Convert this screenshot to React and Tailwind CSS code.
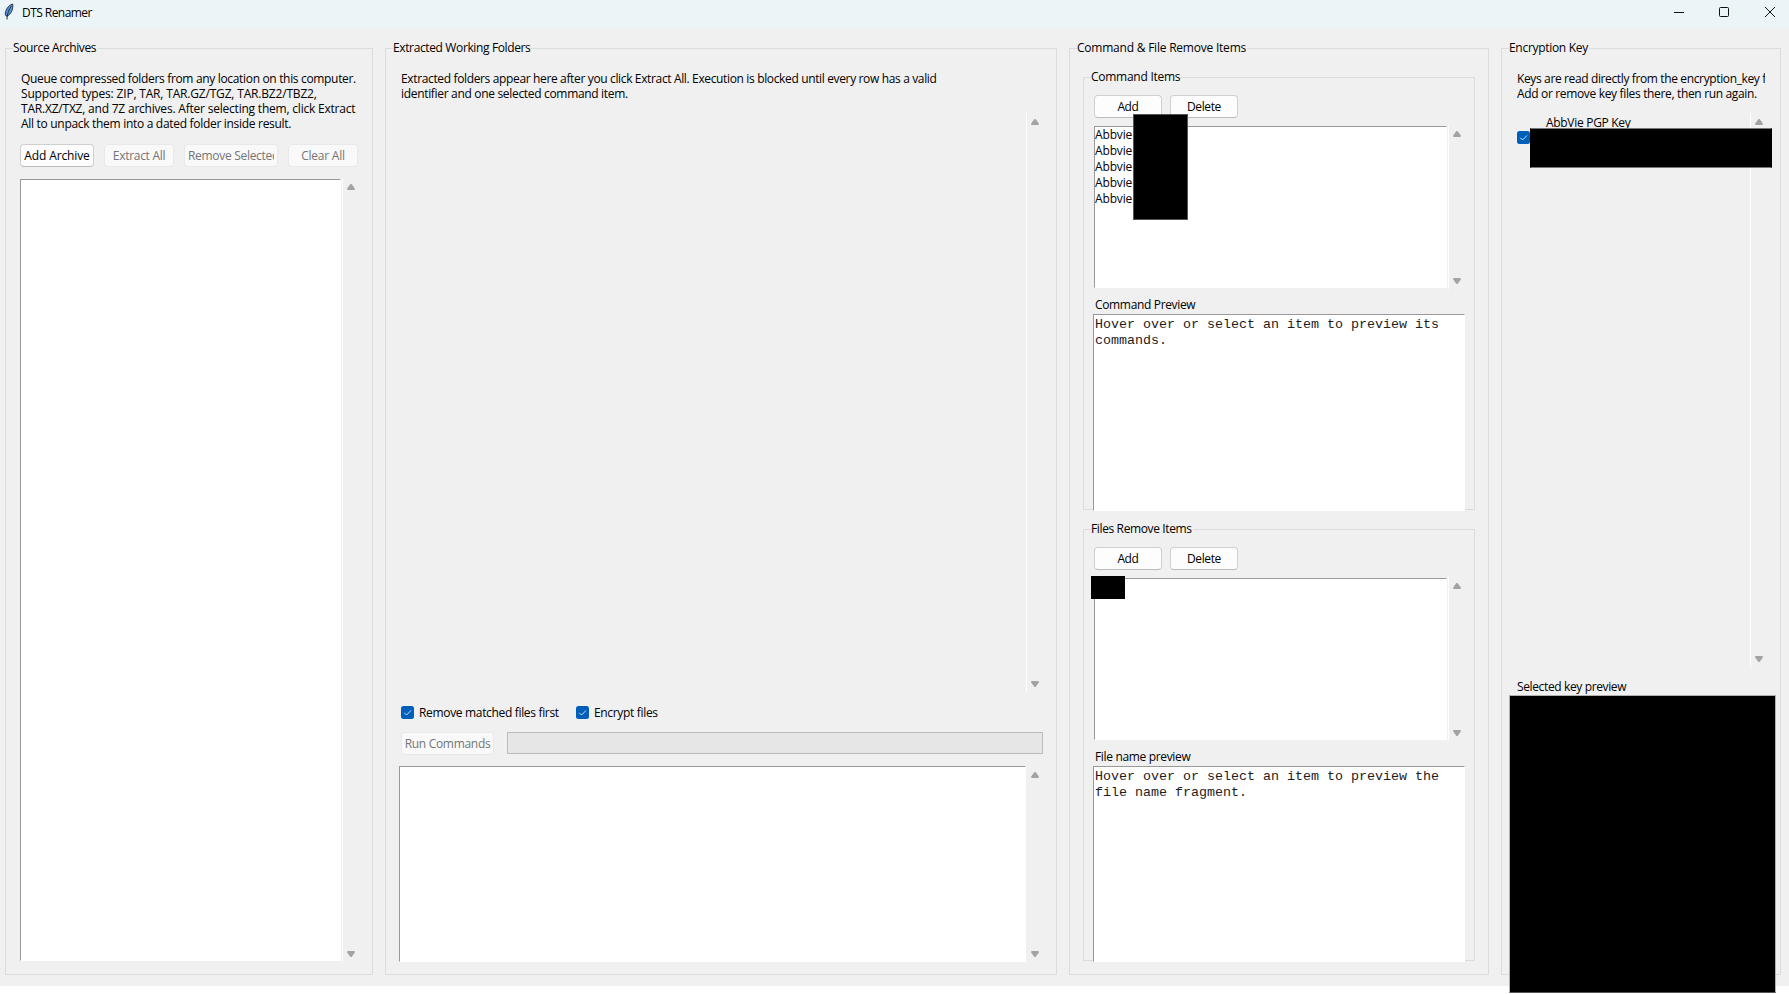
import React from "react";

function Arrow({ down }) {
  return (
    <svg width="8" height="6" viewBox="0 0 8 6" className={down ? "block rotate-180" : "block"}>
      <path d="M3.2 0.3 Q4 -0.3 4.8 0.3 L7.8 4.4 Q8.2 6 7 6 H1 Q-0.2 6 0.2 4.4 Z" fill="#a3a3a3" />
    </svg>
  );
}

function Scrollbar({ className = "" }) {
  return (
    <div className={`flex shrink-0 flex-col justify-between ${className}`}>
      <Arrow />
      <Arrow down />
    </div>
  );
}

function Group({ title, titleClass, className = "", children }) {
  return (
    <section className={`flex shrink-0 flex-col border border-[#dcdcdc] ${className}`}>
      <h2 className={`ml-[7px] -mt-[9px] h-[16px] shrink-0 bg-[#f0f0f0] leading-[16px] ${titleClass}`}>{title}</h2>
      {children}
    </section>
  );
}

function Button({ className = "", padding = "px-[3px]", disabled, children }) {
  return (
    <button
      className={`flex h-[23px] shrink-0 items-center overflow-hidden rounded-[4px] border ${padding} ${
        disabled
          ? "border-[#e9e9e9] bg-[#f9f9f9] text-[#757575]"
          : "border-[#d0d0d0] border-b-[#bcbcbc] bg-[#fdfdfd]"
      } ${className}`}
    >
      <span className="w-full overflow-hidden leading-[17px]">{children}</span>
    </button>
  );
}

function Check() {
  return (
    <svg width="13" height="13" viewBox="0 0 13 13" className="block shrink-0">
      <rect width="13" height="13" rx="2.5" fill="#005fb8" />
      <path d="M3.3 6.8 L5.5 9 L10 4.5" fill="none" stroke="#cfe4f7" strokeWidth="1" />
    </svg>
  );
}

function ItemsGroup({ title, titleClass, height, previewHeight, label, preview, items, cover }) {
  return (
    <Group title={title} titleClass={titleClass} className={`ml-[13px] w-[392px] ${height}`}>
      <div className="ml-[10px] mt-[10px] flex gap-[8px]">
        <Button className="w-[68px] text-center">Add</Button>
        <Button className="w-[68px] text-center">Delete</Button>
      </div>
      <div className="relative ml-[10px] mt-[7px] flex h-[164px] shrink-0">
        <div className="mt-px h-[162px] w-[353px] border border-b-white border-l-[#999] border-r-white border-t-[#999] bg-white">
          {items.map((item, i) => (
            <div key={i} className="h-[16px] leading-[16px] tracking-[-0.15px]">
              {item}
            </div>
          ))}
        </div>
        <div className="ml-px h-full w-px bg-white" />
        <Scrollbar className="ml-[4px] mb-[5px] mt-[6px]" />
        <div className={`absolute bg-black ${cover}`} />
      </div>
      <div className="ml-[11px] mt-[8px] h-[16px] shrink-0 leading-[16px] tracking-[-0.34px]">{label}</div>
      <div
        className={`ml-[9px] mt-px w-[372px] shrink-0 border border-b-white border-l-[#999] border-r-white border-t-[#999] bg-white pl-px pt-[2px] font-['Liberation_Mono','Courier_New',monospace] text-[13.33px] leading-[16px] tracking-normal text-[#1c1c1c] ${previewHeight}`}
      >
        {preview.map((line) => (
          <div key={line} className="whitespace-pre">{line}</div>
        ))}
      </div>
    </Group>
  );
}

export default function App() {
  return (
    <div className="flex h-[994px] w-[1789px] flex-col overflow-hidden bg-white font-['Open_Sans','Noto_Sans',sans-serif] text-[12px] tracking-[-0.37px] whitespace-nowrap text-black">
      <header className="flex h-[28px] shrink-0 bg-[#ebf5f8]">
        <svg width="10" height="17" viewBox="0 0 10 17" className="ml-[4px] mt-[3px] shrink-0">
          <path d="M8.7 1 C5.5 1.8 2.6 5 1.6 8.5 C1 10.6 1.4 12.4 2.2 13.2 C4.6 13 7 10.4 8 7.5 C8.7 5.4 9 3 8.7 1 Z" fill="#5b97dd" stroke="#1d2633" strokeWidth="0.9" />
          <path d="M7.4 3.2 C5 6.3 3.3 10 3 16.5" fill="none" stroke="#101820" strokeWidth="0.9" />
        </svg>
        <h1 className="ml-[8px] mt-[5px] h-[16px] leading-[16px] tracking-[-0.55px]">DTS Renamer</h1>
        <svg width="102" height="12" viewBox="0 0 102 12" className="ml-auto mr-[13px] mt-[6px] shrink-0" fill="none" stroke="#111" strokeWidth="1">
          <path d="M0 6.5 H10" />
          <rect x="45.5" y="1.5" width="9" height="9" rx="1" />
          <path d="M91 1 L101 11 M101 1 L91 11" />
        </svg>
      </header>

      <main className="flex h-[958px] shrink-0 gap-[12px] bg-[#f0f0f0] pl-[5px] pt-[20px]">
        <Group title="Source Archives" titleClass="w-[85px]" className="h-[927px] w-[368px]">
          <div className="ml-[15px] mt-[15px] h-[60px] shrink-0 leading-[15px]">
            <div className="tracking-[-0.33px]">Queue compressed folders from any location on this computer.</div>
            <div className="tracking-[-0.18px]">Supported types: ZIP, TAR, TAR.GZ/TGZ, TAR.BZ2/TBZ2,</div>
            <div className="tracking-[-0.21px]">TAR.XZ/TXZ, and 7Z archives. After selecting them, click Extract</div>
            <div className="tracking-[-0.3px]">All to unpack them into a dated folder inside result.</div>
          </div>
          <div className="ml-[14px] mt-[13px] flex gap-[10px]">
            <Button className="w-[74px] text-center tracking-[-0.12px]">Add Archive</Button>
            <Button disabled className="w-[70px] text-center tracking-[-0.3px]">Extract All</Button>
            <Button disabled className="w-[94px] tracking-[-0.3px]">Remove Selected</Button>
            <Button disabled className="w-[70px] text-center tracking-[-0.25px]">Clear All</Button>
          </div>
          <div className="ml-[14px] mt-[11px] flex h-[784px] shrink-0">
            <div className="mt-px h-[782px] w-[321px] border border-b-white border-l-[#999] border-r-white border-t-[#999] bg-white" />
            <div className="ml-px h-full w-px bg-white" />
            <Scrollbar className="ml-[4px] mb-[5px] mt-[6px]" />
          </div>
        </Group>

        <Group title="Extracted Working Folders" titleClass="w-[138px]" className="h-[927px] w-[672px]">
          <div className="ml-[15px] mt-[15px] h-[30px] shrink-0 leading-[15px]">
            <div className="tracking-[-0.355px]">Extracted folders appear here after you click Extract All. Execution is blocked until every row has a valid</div>
            <div className="tracking-[-0.32px]">identifier and one selected command item.</div>
          </div>
          <div className="ml-[640px] mt-[12px] flex h-[579px] shrink-0">
            <div className="h-full w-px bg-white" />
            <Scrollbar className="ml-[4px] mb-[5px] mt-[6px]" />
          </div>
          <div className="ml-[15px] mt-[14px] flex h-[13px] shrink-0 items-center tracking-[-0.33px]">
            <Check />
            <span className="ml-[5px] w-[157px]">Remove matched files first</span>
            <Check />
            <span className="ml-[5px]">Encrypt files</span>
          </div>
          <div className="ml-[15px] mt-[13px] flex shrink-0">
            <Button disabled padding="px-[2px]" className="w-[93px] tracking-[-0.3px]">Run Commands</Button>
            <div className="ml-[13px] h-[22px] w-[536px] border border-[#bcbcbc] bg-[#e6e6e6]" />
          </div>
          <div className="ml-[13px] mt-[11px] flex h-[196px] shrink-0">
            <div className="w-[627px] border border-b-white border-l-[#999] border-r-white border-t-[#999] bg-white" />
            <Scrollbar className="ml-[5px] mb-[5px] mt-[6px]" />
          </div>
        </Group>

        <Group title="Command & File Remove Items" titleClass="w-[170px] tracking-[-0.22px]" className="h-[927px] w-[420px]">
          <div className="mt-[21px] flex flex-col gap-[19px]">
            <ItemsGroup
              title="Command Items"
              titleClass="w-[90px] tracking-[-0.26px]"
              height="h-[433px]"
              previewHeight="h-[197px]"
              label="Command Preview"
              preview={["Hover over or select an item to preview its", "commands."]}
              items={["Abbvie", "Abbvie", "Abbvie", "Abbvie", "Abbvie"]}
              cover="left-[39px] top-[-11px] h-[106px] w-[55px] border border-[#555]"
            />
            <ItemsGroup
              title="Files Remove Items"
              titleClass="w-[102px]"
              height="h-[432px]"
              previewHeight="h-[196px]"
              label="File name preview"
              preview={["Hover over or select an item to preview the", "file name fragment."]}
              items={[]}
              cover="left-[-3px] top-[-1px] h-[23px] w-[34px]"
            />
          </div>
        </Group>

        <Group title="Encryption Key" titleClass="w-[80px] tracking-[-0.3px]" className="relative h-[927px] w-[280px]">
          <div className="ml-[15px] mt-[15px] h-[30px] w-[248px] shrink-0 overflow-hidden leading-[15px]">
            <div className="tracking-[-0.37px]">Keys are read directly from the encryption_key folder.</div>
            <div className="tracking-[-0.34px]">Add or remove key files there, then run again.</div>
          </div>
          <div className="ml-[15px] mt-[12px] flex h-[554px] shrink-0">
            <div className="flex w-[233px] flex-col">
              <span className="ml-[29px] mt-[2px] h-[16px] leading-[16px] tracking-[-0.3px]">AbbVie PGP Key</span>
              <Check />
            </div>
            <div className="h-full w-px bg-white" />
            <Scrollbar className="ml-[4px] mb-[5px] mt-[6px]" />
          </div>
          <div className="ml-[15px] mt-[12px] h-[16px] shrink-0 leading-[16px]">Selected key preview</div>
          <div className="absolute left-[28px] top-[79px] h-[40px] w-[242px] border border-black border-b-[#777] border-t-[#777] bg-black" />
          <div className="absolute left-[7px] top-[646px] h-[298px] w-[267px] border border-[#b0b0b0] border-b-[#555] bg-black" />
        </Group>
      </main>
    </div>
  );
}
